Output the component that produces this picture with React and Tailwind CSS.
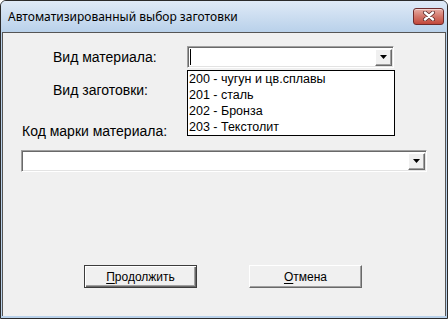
const materials = [
  "200 - чугун и цв.сплавы",
  "201 - сталь",
  "202 - Бронза",
  "203 - Текстолит",
];

function DropButton() {
  return (
    <div className="flex h-[17px] w-[17px] items-center justify-center border border-t-white border-l-white border-b-[#696969] border-r-[#696969] bg-[#f0f0f0] shadow-[inset_-1px_-1px_0_#a0a0a0]">
      <svg width="7" height="4" viewBox="0 0 7 4">
        <path d="M0 0h7L3.5 4z" fill="#000" />
      </svg>
    </div>
  );
}

function Combo({ width, cursor }) {
  return (
    <div
      className={`flex h-[22px] items-center justify-between border border-t-[#a0a0a0] border-l-[#a0a0a0] border-b-white border-r-white bg-white pl-[2px] pr-[1px] shadow-[inset_1px_1px_0_#696969,inset_-1px_-1px_0_#e3e3e3] ${width}`}
    >
      {cursor ? <div className="h-[16px] w-px bg-black" /> : <div />}
      <DropButton />
    </div>
  );
}

function WinButton({ label, isDefault }) {
  const [first, ...rest] = label;
  return (
    <button
      className={`flex h-[23px] w-[113px] items-center justify-center bg-[#f0f0f0] text-[12px] text-black ${
        isDefault
          ? "border border-[#3c3c3c] shadow-[inset_1px_1px_0_#fff,inset_-1px_-1px_0_#696969,inset_-2px_-2px_0_#a0a0a0]"
          : "border border-t-white border-l-white border-b-[#696969] border-r-[#696969] shadow-[inset_-1px_-1px_0_#a0a0a0]"
      }`}
    >
      <span className="underline underline-offset-2">{first}</span>
      {rest.join("")}
    </button>
  );
}

export default function App() {
  return (
    <div className="flex h-[319px] w-[448px] flex-col overflow-hidden rounded-t-[6px] border border-[#2a2a2a] bg-[#b9d1ea] font-['Liberation_Sans',sans-serif]">
      {/* Title bar */}
      <div className="flex h-[31px] shrink-0 items-center justify-between bg-gradient-to-b from-[#dfeaf7] to-[#b9d1ea] pl-[7px] pr-[3px]">
        <span className="font-['Noto_Sans',sans-serif] text-[12px] text-black">
          Автоматизированный выбор заготовки
        </span>
        <div className="mb-[1px] flex h-[17px] w-[31px] items-center justify-center rounded-[3px] border border-[#6e2b2b] bg-gradient-to-b from-[#e6aca4] via-[#d2766a] to-[#c2463a] shadow-[inset_0_1px_0_rgba(255,255,255,0.5)]">
          <svg width="14" height="10" viewBox="0 0 14 10">
            <path d="M3 1.5l8 7M11 1.5l-8 7" stroke="#5a2a2a" strokeWidth="4" strokeLinecap="round" />
            <path d="M3 1.5l8 7M11 1.5l-8 7" stroke="#fff" strokeWidth="2.4" strokeLinecap="round" />
          </svg>
        </div>
      </div>

      {/* Client area */}
      <div className="relative mx-[1px] mb-[2px] flex flex-1 flex-col border-x border-t border-[#555] bg-[#f0f0f0] text-[14px] text-black">
        <div className="mt-[13px] flex items-center pl-[50px]">
          <span className="w-[134px]">Вид материала:</span>
          <Combo width="w-[207px]" cursor />
        </div>

        <div className="mt-[12px] flex h-[21px] items-center pl-[50px]">
          <span>Вид заготовки:</span>
        </div>

        <div className="mt-[22px] pl-[19px] leading-[16px]">Код марки материала:</div>

        <div className="mt-[11px] pl-[18px]">
          <Combo width="w-[406px]" />
        </div>

        <div className="mt-[93px] flex gap-[52px] pl-[81px]">
          <WinButton label="Продолжить" isDefault />
          <WinButton label="Отмена" />
        </div>

        {/* Open dropdown list */}
        <div className="absolute left-[184px] top-[37px] w-[208px] border border-black bg-white text-[12.5px]">
          {materials.map((m) => (
            <div key={m} className="h-[16px] pl-[1px] leading-[16px]">
              {m}
            </div>
          ))}
        </div>
      </div>
    </div>
  );
}
